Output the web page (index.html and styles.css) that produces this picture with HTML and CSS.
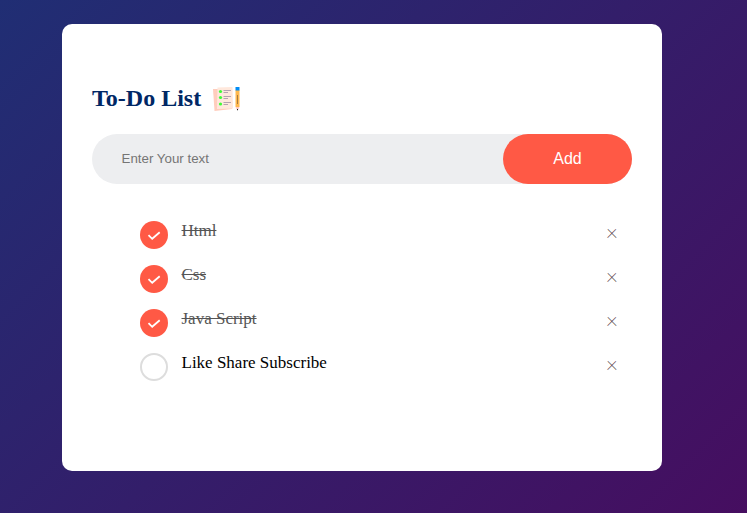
FILE: index.html
```html
<!DOCTYPE html>
<html lang="en">
<head>
<meta charset="utf-8">
<title>To-Do List</title>
<link rel="stylesheet" href="styles.css">
</head>
<body>
<div class="container">
  <div class="todo-app">
    <h2>To-Do List
      <svg class="icon" viewBox="0 0 30 30">
        <path d="M2 6h17l2 20L3.500 28z" fill="#ffcdbd"/>
        <path d="M6.500 4.500L21.500 4L22 25.500L6 26z" fill="#ffe8dc"/>
        <g fill="#3dfc36"><circle cx="9.500" cy="8.500" r="1.600"/><circle cx="9.500" cy="14.500" r="1.600"/><circle cx="9.500" cy="21" r="1.600"/></g>
        <path d="M12.500 7.500h7.500M12.500 9.500h4.500M12.500 13.500h7.500M12.500 15.500h4.500M12.500 19.500h7.500M12.500 21.500h4.500" stroke="#b5a3b0" stroke-width="1"/>
        <path d="M24.500 7h4v17h-4z" fill="#ffb84e"/>
        <path d="M24.500 4h4v3.500h-4z" fill="#008cf5"/>
        <path d="M26.500 12v9" stroke="#a97a3d" stroke-width="1"/>
        <path d="M24.500 24h4l-1.200 2.500h-1.600z" fill="#ffc9c2"/>
        <path d="M26 26h1v1.200h-1z" fill="#222"/>
      </svg>
    </h2>
    <div class="row">
      <input type="text" placeholder="Enter Your text">
      <button>Add</button>
    </div>
    <ul>
      <li class="checked"><i><svg viewBox="0 0 28 28"><path d="M8.500 14.200l3.700 3.600l7.500-6.500"/></svg></i><p>Html</p><span>×</span></li>
      <li class="checked"><i><svg viewBox="0 0 28 28"><path d="M8.500 14.200l3.700 3.600l7.500-6.500"/></svg></i><p>Css</p><span>×</span></li>
      <li class="checked"><i><svg viewBox="0 0 28 28"><path d="M8.500 14.200l3.700 3.600l7.500-6.500"/></svg></i><p>Java Script</p><span>×</span></li>
      <li><i></i><p>Like Share Subscribe</p><span>×</span></li>
    </ul>
  </div>
</div>
</body>
</html>
```
FILE: styles.css
```css
* { margin: 0; padding: 0; box-sizing: border-box; }
body { font-family: "Liberation Serif", serif; }
.container { height: 513px; overflow: hidden; padding: 24px 85px 0 62px; background: linear-gradient(135deg, #202e74, #460e60); }
.todo-app { height: 447px; width: 600px; padding: 59px 30px 0; background: #fff; border-radius: 10px; }
h2 { display: flex; align-items: center; height: 30px; margin-bottom: 21px; color: #002765; font-size: 24px; }
.icon { width: 30px; height: 30px; margin-left: 10px; }
.row { display: flex; height: 50px; background: #edeef0; border-radius: 30px; margin-bottom: 25px; }
input { flex: 1; min-width: 0; border: 0; background: transparent; padding: 0 0 2px 29.5px; font: 13.333px "Liberation Sans", sans-serif; }
input::placeholder { color: #757575; }
button { width: 129px; border: 0; border-radius: 40px; background: #ff5945; color: #fff; font: 16px "Liberation Sans", sans-serif; }
ul { list-style: none; padding-left: 48px; }
li { display: flex; height: 44px; }
i { width: 28px; height: 28px; margin: 12px 13.5px 0 0; border: 2px solid #ddd; border-radius: 50%; }
.checked i { border: 0; background: #ff5945; }
i svg { display: block; width: 28px; height: 28px; fill: none; stroke: #fff; stroke-width: 1.8; }
p { flex: 1; padding-top: 13px; font-size: 17px; line-height: 18px; color: #000; }
.checked p { color: #555; text-decoration: line-through; }
span { width: 40px; height: 40px; margin-top: 2px; line-height: 40px; font-family: Roboto, sans-serif; font-weight: 100; font-size: 22px; text-align: center; color: #553c48; }
```
